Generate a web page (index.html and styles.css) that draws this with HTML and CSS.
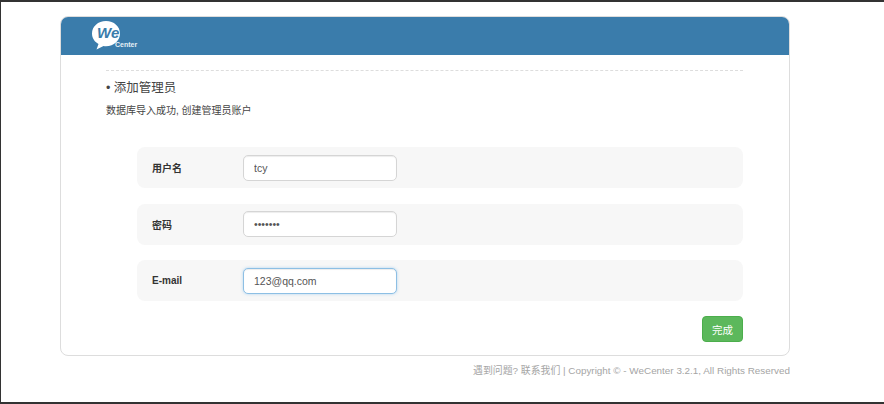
FILE: index.html
```html
<!DOCTYPE html>
<html lang="zh">
<head>
<meta charset="utf-8">
<title>WeCenter</title>
<link rel="stylesheet" href="styles.css">
</head>
<body>
<div class="frame">
  <div class="card">
    <header class="card-head">
      <div class="logo">
        <svg class="bubble" width="30" height="30" viewBox="0 0 30 30"><path d="M15 1C7 1 1 6.500 1 13.500c0 4.500 2.500 8.300 6.500 10.500L5.500 29.500 12.500 26c.8.100 1.700.2 2.500.2 8 0 14-5.700 14-12.700S23 1 15 1z" fill="#fff"/></svg>
        <span class="we">We</span>
        <span class="center">Center</span>
      </div>
    </header>
    <main class="card-body">
      <h1 class="title">• 添加管理员</h1>
      <p class="desc">数据库导入成功, 创建管理员账户</p>
      <div class="rows">
        <div class="row"><label class="label">用户名</label><input class="input" type="text" value="tcy"></div>
        <div class="row"><label class="label">密码</label><input class="input" type="password" value="1234567"></div>
        <div class="row"><label class="label">E-mail</label><input class="input focus" type="text" value="123@qq.com"></div>
      </div>
      <div class="actions"><button class="btn" type="button">完成</button></div>
    </main>
  </div>
  <footer class="foot">遇到问题? 联系我们 | Copyright © - WeCenter 3.2.1, All Rights Reserved</footer>
</div>
</body>
</html>
```
FILE: styles.css
```css
* { box-sizing: border-box; }
html, body { margin: 0; padding: 0; }
body {
  background: #fff;
  font-family: "Liberation Sans", "Noto Sans CJK SC", sans-serif;
  color: #333;
}
.frame {
  width: 884px;
  height: 404px;
  overflow: hidden;
  border-top: 2px solid #333;
  border-bottom: 2px solid #333;
  border-left: 1px solid #333;
  padding: 14px 0 0 59px;
}
.card {
  width: 730px;
  height: 340px;
  border: 1px solid #ddd;
  border-radius: 8px;
  overflow: hidden;
  background: #fff;
}
.card-head {
  height: 38px;
  background: #3a7cab;
  padding-left: 30px;
}
.logo { position: relative; width: 50px; height: 38px; }
.bubble { position: absolute; left: 0; top: 3px; }
.we {
  position: absolute;
  left: 6px;
  top: 6px;
  font-size: 15px;
  font-weight: bold;
  font-style: italic;
  color: #3a7cab;
  line-height: 20px;
}
.center {
  position: absolute;
  left: 24px;
  top: 23px;
  font-size: 7px;
  font-weight: bold;
  color: #e6eff5;
  line-height: 10px;
}
.card-body { padding: 15px 46px 0 45px; }
.title {
  margin: 0;
  padding-top: 9px;
  border-top: 1px dashed #ddd;
  font-size: 12.500px;
  font-weight: normal;
  line-height: 17px;
  color: #444;
}
.desc {
  margin: 7px 0 0;
  font-size: 10px;
  line-height: 14px;
  color: #444;
}
.rows {
  display: flex;
  flex-direction: column;
  gap: 15.500px;
  margin: 29px 0 0 31px;
}
.row {
  display: flex;
  align-items: center;
  height: 41px;
  padding-left: 15px;
  background: #f7f7f7;
  border-radius: 8px;
}
.label {
  width: 91px;
  font-size: 10px;
  font-weight: bold;
  color: #333;
}
.input {
  width: 154px;
  height: 26px;
  padding: 0 10px;
  border: 1px solid #d5d5d5;
  border-radius: 5px;
  background: #fff;
  font-family: inherit;
  font-size: 10.500px;
  color: #555;
  outline: none;
  box-shadow: inset 0 1px 1px rgba(0, 0, 0, .075);
}
.focus {
  border-color: #8dbfe4;
  box-shadow: inset 0 1px 1px rgba(0, 0, 0, .075), 0 0 3px rgba(102, 175, 233, .5);
}
.actions { display: flex; justify-content: flex-end; margin-top: 15px; }
.btn {
  width: 41px;
  height: 26px;
  padding: 0;
  border: 1px solid #4cae4c;
  border-radius: 4px;
  background: #5cb85c;
  color: #fff;
  font-family: inherit;
  font-size: 10.500px;
}
.foot {
  width: 730px;
  margin-top: 8px;
  font-size: 9.900px;
  line-height: 14px;
  text-align: right;
  color: #a5a5a5;
}
```
